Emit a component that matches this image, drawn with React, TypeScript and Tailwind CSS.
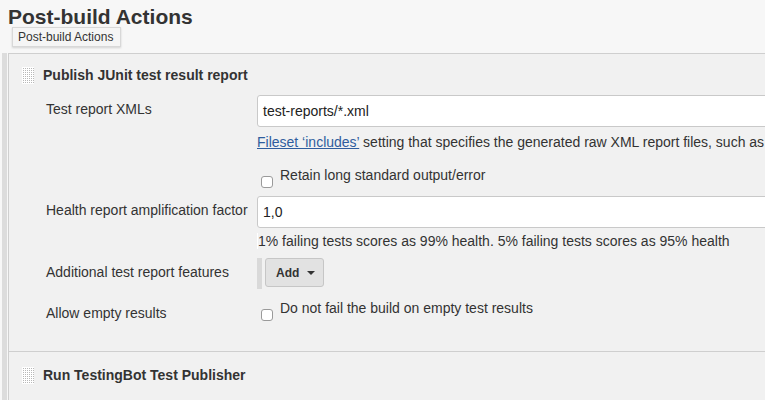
import React from "react";

function Grip() {
  const dots: JSX.Element[] = [];
  for (let y = 1; y < 17; y += 2) {
    for (let x = 1; x < 12; x += 2) {
      dots.push(<rect key={`${x}-${y}`} x={x} y={y} width="1" height="1" fill="#b8b8b8" />);
    }
  }
  return (
    <svg width="12" height="17" viewBox="0 0 12 17" className="shrink-0">
      <rect width="12" height="17" fill="#ffffff" />
      {dots}
    </svg>
  );
}

function SectionTitle({ title, top }: { title: string; top: string }) {
  return (
    <div className={`${top} h-[22px] pl-[13px] flex items-center`}>
      <Grip />
      <span className="ml-[9px] text-[14px] font-bold leading-[16px] text-[#333]">{title}</span>
    </div>
  );
}

function Checkbox() {
  return <span className="mt-[9px] ml-[4px] w-[12px] h-[12px] shrink-0 rounded-[3px] border border-[#9a9a9a] bg-white" />;
}

function TextInput({ value }: { value: string }) {
  return (
    <div className="h-[32px] w-full rounded-l-[3px] border border-[#c9c9c9] bg-white pl-[5px] flex items-center text-[14px] text-[#222]">
      {value}
    </div>
  );
}

export default function App() {
  return (
    <div className="relative w-[765px] h-[400px] overflow-hidden bg-[#f7f7f7] font-['Liberation_Sans',Arial,sans-serif] text-[#333]">
      <h1 className="pl-2 pt-1 text-[21px] leading-[26px] font-bold text-[#333]">Post-build Actions</h1>

      {/* tooltip */}
      <div className="absolute left-[12px] top-[27px] w-[109px] h-[20px] border border-[#d8d8d8] bg-[#f5f5f5] shadow-[0_1px_2px_rgba(0,0,0,0.15)] pl-[5px] text-[12px] leading-[18px] text-[#333]">
        Post-build Actions
      </div>

      <div className="mt-[23px] flex h-[400px]">
        <div className="ml-[2px] w-[5px] shrink-0 bg-[#dcdcdc]" />
        <div className="ml-[1px] shrink-0 flex flex-col">
          {/* Publish JUnit */}
          <div className="w-[1000px] h-[298px] border-l border-t border-[#cfcfcf] bg-[#f1f1f1] flex flex-col">
            <SectionTitle title="Publish JUnit test result report" top="mt-[10px]" />

            <div className="mt-[9px] flex items-start pl-[37px]">
              <div className="w-[211px] shrink-0 pt-[6px] text-[14px] leading-[16px]">Test report XMLs</div>
              <div className="flex-1">
                <TextInput value="test-reports/*.xml" />
              </div>
            </div>

            <div className="mt-[7px] pl-[248px] text-[14px] leading-[16px] whitespace-nowrap">
              <a className="text-[#2f5d9e] underline">Fileset ‘includes’</a> setting that specifies the generated raw XML report files, such as
            </div>

            <div className="mt-[17px] pl-[248px] flex items-start">
              <Checkbox />
              <span className="ml-[7px] text-[14px] leading-[16px]">Retain long standard output/error</span>
            </div>

            <div className="mt-[8px] flex items-start pl-[37px]">
              <div className="w-[211px] shrink-0 pt-[6px] text-[14px] leading-[16px] whitespace-nowrap">Health report amplification factor</div>
              <div className="flex-1">
                <TextInput value="1,0" />
              </div>
            </div>

            <div className="mt-[5px] ml-[248px] border-l border-white text-[14px] leading-[16px] whitespace-nowrap">
              1% failing tests scores as 99% health. 5% failing tests scores as 95% health
            </div>

            <div className="mt-[9px] flex items-start pl-[37px]">
              <div className="w-[211px] shrink-0 pt-[6px] text-[14px] leading-[16px]">Additional test report features</div>
              <div className="flex items-start">
                <div className="w-[5px] h-[31px] bg-[#d9d9d9]" />
                <button className="ml-[3px] w-[59px] h-[29px] rounded-[3px] border border-[#c6c6c6] bg-[#e2e2e2] pl-[10px] flex items-center text-[12px] font-bold text-[#333]">
                  Add
                  <svg width="8" height="4" viewBox="0 0 8 4" className="ml-[8px]">
                    <path d="M0 0h8L4 4z" fill="#333" />
                  </svg>
                </button>
              </div>
            </div>

            <div className="mt-[11px] flex items-start pl-[37px]">
              <div className="w-[211px] shrink-0 pt-[5px] text-[14px] leading-[16px]">Allow empty results</div>
              <div className="flex items-start">
                <Checkbox />
                <span className="ml-[7px] text-[14px] leading-[16px]">Do not fail the build on empty test results</span>
              </div>
            </div>
          </div>

          {/* Run TestingBot */}
          <div className="w-[1000px] h-[100px] border-l border-t border-[#cfcfcf] bg-[#f1f1f1]">
            <SectionTitle title="Run TestingBot Test Publisher" top="mt-[12px]" />
          </div>
        </div>
      </div>
    </div>
  );
}
